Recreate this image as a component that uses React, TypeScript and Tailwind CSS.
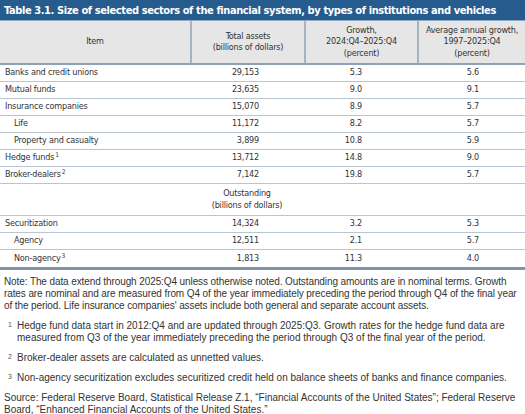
import React from 'react';

const narrow = "font-['Liberation_Sans_Narrow','DejaVu_Sans_Condensed','Liberation_Sans',sans-serif]";

type Row = {
  label: string;
  sup?: string;
  sub?: boolean;
  total: string;
  growth: string;
  avg: string;
};

const assets: Row[] = [
  { label: 'Banks and credit unions', total: '29,153', growth: '5.3', avg: '5.6' },
  { label: 'Mutual funds', total: '23,635', growth: '9.0', avg: '9.1' },
  { label: 'Insurance companies', total: '15,070', growth: '8.9', avg: '5.7' },
  { label: 'Life', sub: true, total: '11,172', growth: '8.2', avg: '5.7' },
  { label: 'Property and casualty', sub: true, total: '3,899', growth: '10.8', avg: '5.9' },
  { label: 'Hedge funds', sup: '1', total: '13,712', growth: '14.8', avg: '9.0' },
  { label: 'Broker-dealers', sup: '2', total: '7,142', growth: '19.8', avg: '5.7' },
];

const outstanding: Row[] = [
  { label: 'Securitization', total: '14,324', growth: '3.2', avg: '5.3' },
  { label: 'Agency', sub: true, total: '12,511', growth: '2.1', avg: '5.7' },
  { label: 'Non-agency', sup: '3', sub: true, total: '1,813', growth: '11.3', avg: '4.0' },
];

const cols = 'grid grid-cols-[190px_114px_113px_1fr]';

function DataRow({ row, last }: { row: Row; last?: boolean }) {
  return (
    <div
      className={`${cols} items-center ${
        last ? 'h-[20px] border-b-[3px] border-[#7f93a9]' : 'h-[17px] border-b border-[#b9c5d1]'
      }`}
    >
      <div className={row.sub ? 'pl-[14px]' : 'pl-[5px]'}>
        {row.label}
        {row.sup && <sup className="text-[6.5px] ml-[1px]">{row.sup}</sup>}
      </div>
      <div className="text-right pr-[45px]">{row.total}</div>
      <div className="text-right pr-[55px]">{row.growth}</div>
      <div className="text-right pr-[46px]">{row.avg}</div>
    </div>
  );
}

function Footnote({ n, children }: { n: string; children: React.ReactNode }) {
  return (
    <div className="flex">
      <span className="w-[13px] shrink-0 pl-[4px] text-[7px] leading-[10px] text-[#555]">{n}</span>
      <p>{children}</p>
    </div>
  );
}

export default function App() {
  return (
    <div className="w-[525px] h-[414px] bg-white overflow-hidden text-[#333]">
      {/* Title bar */}
      <div className="h-[21px] bg-[#265b8e] border-b border-[#8fa9c4] px-[4px] flex items-center">
        <h1 className={`${narrow} text-white font-bold text-[11px] leading-none tracking-[-0.4px] whitespace-nowrap`}>
          Table 3.1. Size of selected sectors of the financial system, by types of institutions and vehicles
        </h1>
      </div>

      <div className={`${narrow} text-[9px] tracking-[-0.2px]`}>
        {/* Column headers */}
        <div className={`${cols} h-[44px] bg-[#e6e6e6] border-b-2 border-[#8ea1b5] text-center leading-[11.5px]`}>
          <div className="flex items-center justify-center">Item</div>
          <div className="flex items-center justify-center border-l-2 border-[#a5b3c2]">
            Total assets
            <br />
            (billions of dollars)
          </div>
          <div className="flex items-center justify-center border-l-2 border-[#a5b3c2]">
            Growth,
            <br />
            2024:Q4–2025:Q4
            <br />
            (percent)
          </div>
          <div className="flex items-center justify-center border-l-2 border-[#a5b3c2] whitespace-nowrap">
            Average annual growth,
            <br />
            1997–2025:Q4
            <br />
            (percent)
          </div>
        </div>

        {assets.map((r) => (
          <DataRow key={r.label} row={r} />
        ))}

        <div className={`${cols} h-[32px] border-b border-[#b9c5d1] items-center leading-[11.5px]`}>
          <div />
          <div className="text-center">
            Outstanding
            <br />
            (billions of dollars)
          </div>
        </div>

        {outstanding.map((r, i) => (
          <DataRow key={r.label} row={r} last={i === outstanding.length - 1} />
        ))}
      </div>

      {/* Notes */}
      <div className="font-['Liberation_Sans',sans-serif] text-[10px] leading-[12px] pl-[4px] pt-[6px] flex flex-col gap-[8px]">
        <p className="tracking-[-0.1px] whitespace-nowrap">
          Note: The data extend through 2025:Q4 unless otherwise noted. Outstanding amounts are in nominal terms. Growth
          <br />
          rates are nominal and are measured from Q4 of the year immediately preceding the period through Q4 of the final year
          <br />
          of the period. Life insurance companies' assets include both general and separate account assets.
        </p>
        <Footnote n="1">
          Hedge fund data start in 2012:Q4 and are updated through 2025:Q3. Growth rates for the hedge fund data are
          measured from Q3 of the year immediately preceding the period through Q3 of the final year of the period.
        </Footnote>
        <Footnote n="2">Broker-dealer assets are calculated as unnetted values.</Footnote>
        <Footnote n="3">
          Non-agency securitization excludes securitized credit held on balance sheets of banks and finance companies.
        </Footnote>
        <p>
          Source: Federal Reserve Board, Statistical Release Z.1, “Financial Accounts of the United States”; Federal Reserve
          Board, “Enhanced Financial Accounts of the United States.”
        </p>
      </div>
    </div>
  );
}
